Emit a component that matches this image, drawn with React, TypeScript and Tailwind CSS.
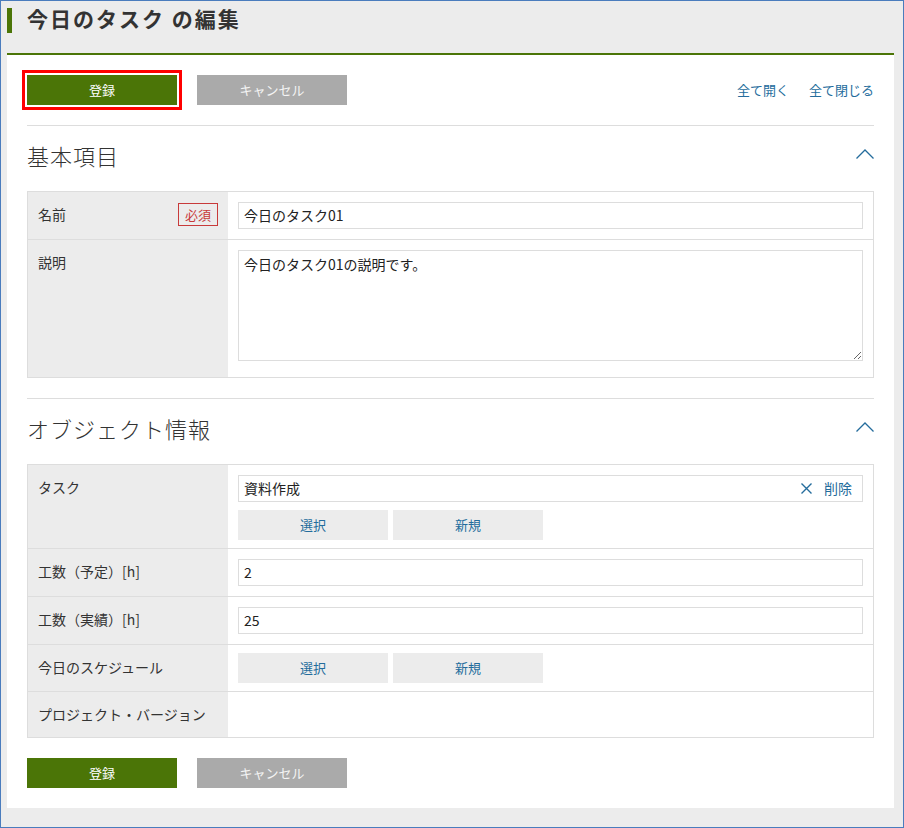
import React from 'react';

const FONT = { fontFamily: '"Noto Sans CJK JP", "Noto Sans", sans-serif' };

function ChevronUp() {
    return (
        <svg width="18" height="10" viewBox="0 0 18 10" className="block -mt-[2px]">
            <polyline points="0.5,9.5 9,1 17.5,9.5" fill="none" stroke="#246c9c" strokeWidth="1.3" />
        </svg>
    );
}

function SectionHeader({ title }: { title: string }) {
    return (
        <div className="border-t border-[#dddddd] h-[59px] mb-[7px] flex items-center justify-between">
            <h2 className="text-[22px] tracking-[1px] text-[#333333] font-light leading-none">{title}</h2>
            <ChevronUp />
        </div>
    );
}

function Label({ children, required }: { children: React.ReactNode; required?: boolean }) {
    return (
        <div className="bg-[#ececec] px-[10px] py-[10px] flex items-start justify-between">
            <span className="text-[14px] leading-[25px] text-[#333333]">{children}</span>
            {required && (
                <span className="w-[40px] h-[23px] mt-[1px] border border-[#c83a3a] text-[#c83a3a] text-[13px] flex items-center justify-center">
                    必須
                </span>
            )}
        </div>
    );
}

function TextInput({ value }: { value: string }) {
    return (
        <div className="h-[27px] border border-[#dddddd] px-[5px] flex items-center text-[14px] text-[#222222]">
            {value}
        </div>
    );
}

function SubButtons() {
    return (
        <div className="flex gap-[5px]">
            <button className="w-[150px] h-[30px] bg-[#ececec] text-[13px] text-[#246c9c]">選択</button>
            <button className="w-[150px] h-[30px] bg-[#ececec] text-[13px] text-[#246c9c]">新規</button>
        </div>
    );
}

function ActionButtons({ highlight }: { highlight?: boolean }) {
    return (
        <div className="flex gap-[20px]">
            <button
                className={`w-[150px] h-[30px] bg-[#4b7507] text-white text-[13px] ${highlight ? 'outline-3 outline-solid outline-offset-2 outline-[#ff0000]' : ''}`}
            >
                登録
            </button>
            <button className="w-[150px] h-[30px] bg-[#aaaaaa] text-[#f4f4f4] text-[13px]">キャンセル</button>
        </div>
    );
}

export default function App() {
    return (
        <div style={FONT} className="w-[904px] h-[828px] border border-[#4a7cbd] bg-[#ececec] pl-[6px] pr-[9px] flex flex-col">
            {/* title bar */}
            <div className="h-[52px] pt-[7px] flex items-start gap-[15px]">
                <div className="w-[5px] h-[25px] bg-[#4b7507]" />
                <h1 className="text-[21px] leading-[21px] font-bold tracking-[2px] text-[#333333]">今日のタスク の編集</h1>
            </div>

            <div className="bg-white border-t-2 border-[#4b7507] px-[20px] py-[20px]">
                <div className="flex items-center justify-between pb-[20px]">
                    <ActionButtons highlight />
                    <div className="flex gap-[20px] text-[13px] text-[#246c9c]">
                        <a>全て開く</a>
                        <a>全て閉じる</a>
                    </div>
                </div>

                <SectionHeader title="基本項目" />
                <div className="border border-[#dddddd] divide-y divide-[#dddddd]">
                    <div className="grid grid-cols-[200px_1fr]">
                        <Label required>名前</Label>
                        <div className="px-[10px] py-[10px]">
                            <TextInput value="今日のタスク01" />
                        </div>
                    </div>
                    <div className="grid grid-cols-[200px_1fr]">
                        <Label>説明</Label>
                        <div className="px-[10px] pt-[10px] pb-[16px]">
                            <textarea
                                defaultValue="今日のタスク01の説明です。"
                                className="block w-full h-[111px] border border-[#dddddd] px-[5px] py-[3px] text-[14px] leading-[20px] text-[#222222] resize-y outline-none"
                            />
                        </div>
                    </div>
                </div>

                <div className="h-[20px]" />
                <SectionHeader title="オブジェクト情報" />
                <div className="border border-[#dddddd] divide-y divide-[#dddddd]">
                    <div className="grid grid-cols-[200px_1fr]">
                        <Label>タスク</Label>
                        <div className="px-[10px] pt-[10px] pb-[8px] flex flex-col gap-[8px]">
                            <div className="h-[27px] border border-[#dddddd] pl-[5px] pr-[10px] flex items-center justify-between text-[14px] text-[#222222]">
                                <span>資料作成</span>
                                <span className="flex items-center gap-[12px] text-[#246c9c]">
                                    <svg width="11" height="11" viewBox="0 0 11 11">
                                        <path d="M0.5 0.5 L10.5 10.5 M10.5 0.5 L0.5 10.5" stroke="#246c9c" strokeWidth="1.4" />
                                    </svg>
                                    削除
                                </span>
                            </div>
                            <SubButtons />
                        </div>
                    </div>
                    <div className="grid grid-cols-[200px_1fr]">
                        <Label>工数（予定）[h]</Label>
                        <div className="px-[10px] py-[10px]">
                            <TextInput value="2" />
                        </div>
                    </div>
                    <div className="grid grid-cols-[200px_1fr]">
                        <Label>工数（実績）[h]</Label>
                        <div className="px-[10px] py-[10px]">
                            <TextInput value="25" />
                        </div>
                    </div>
                    <div className="grid grid-cols-[200px_1fr]">
                        <Label>今日のスケジュール</Label>
                        <div className="px-[10px] py-[8px]">
                            <SubButtons />
                        </div>
                    </div>
                    <div className="grid grid-cols-[200px_1fr]">
                        <Label>プロジェクト・バージョン</Label>
                        <div />
                    </div>
                </div>

                <div className="pt-[20px]">
                    <ActionButtons />
                </div>
            </div>
        </div>
    );
}
